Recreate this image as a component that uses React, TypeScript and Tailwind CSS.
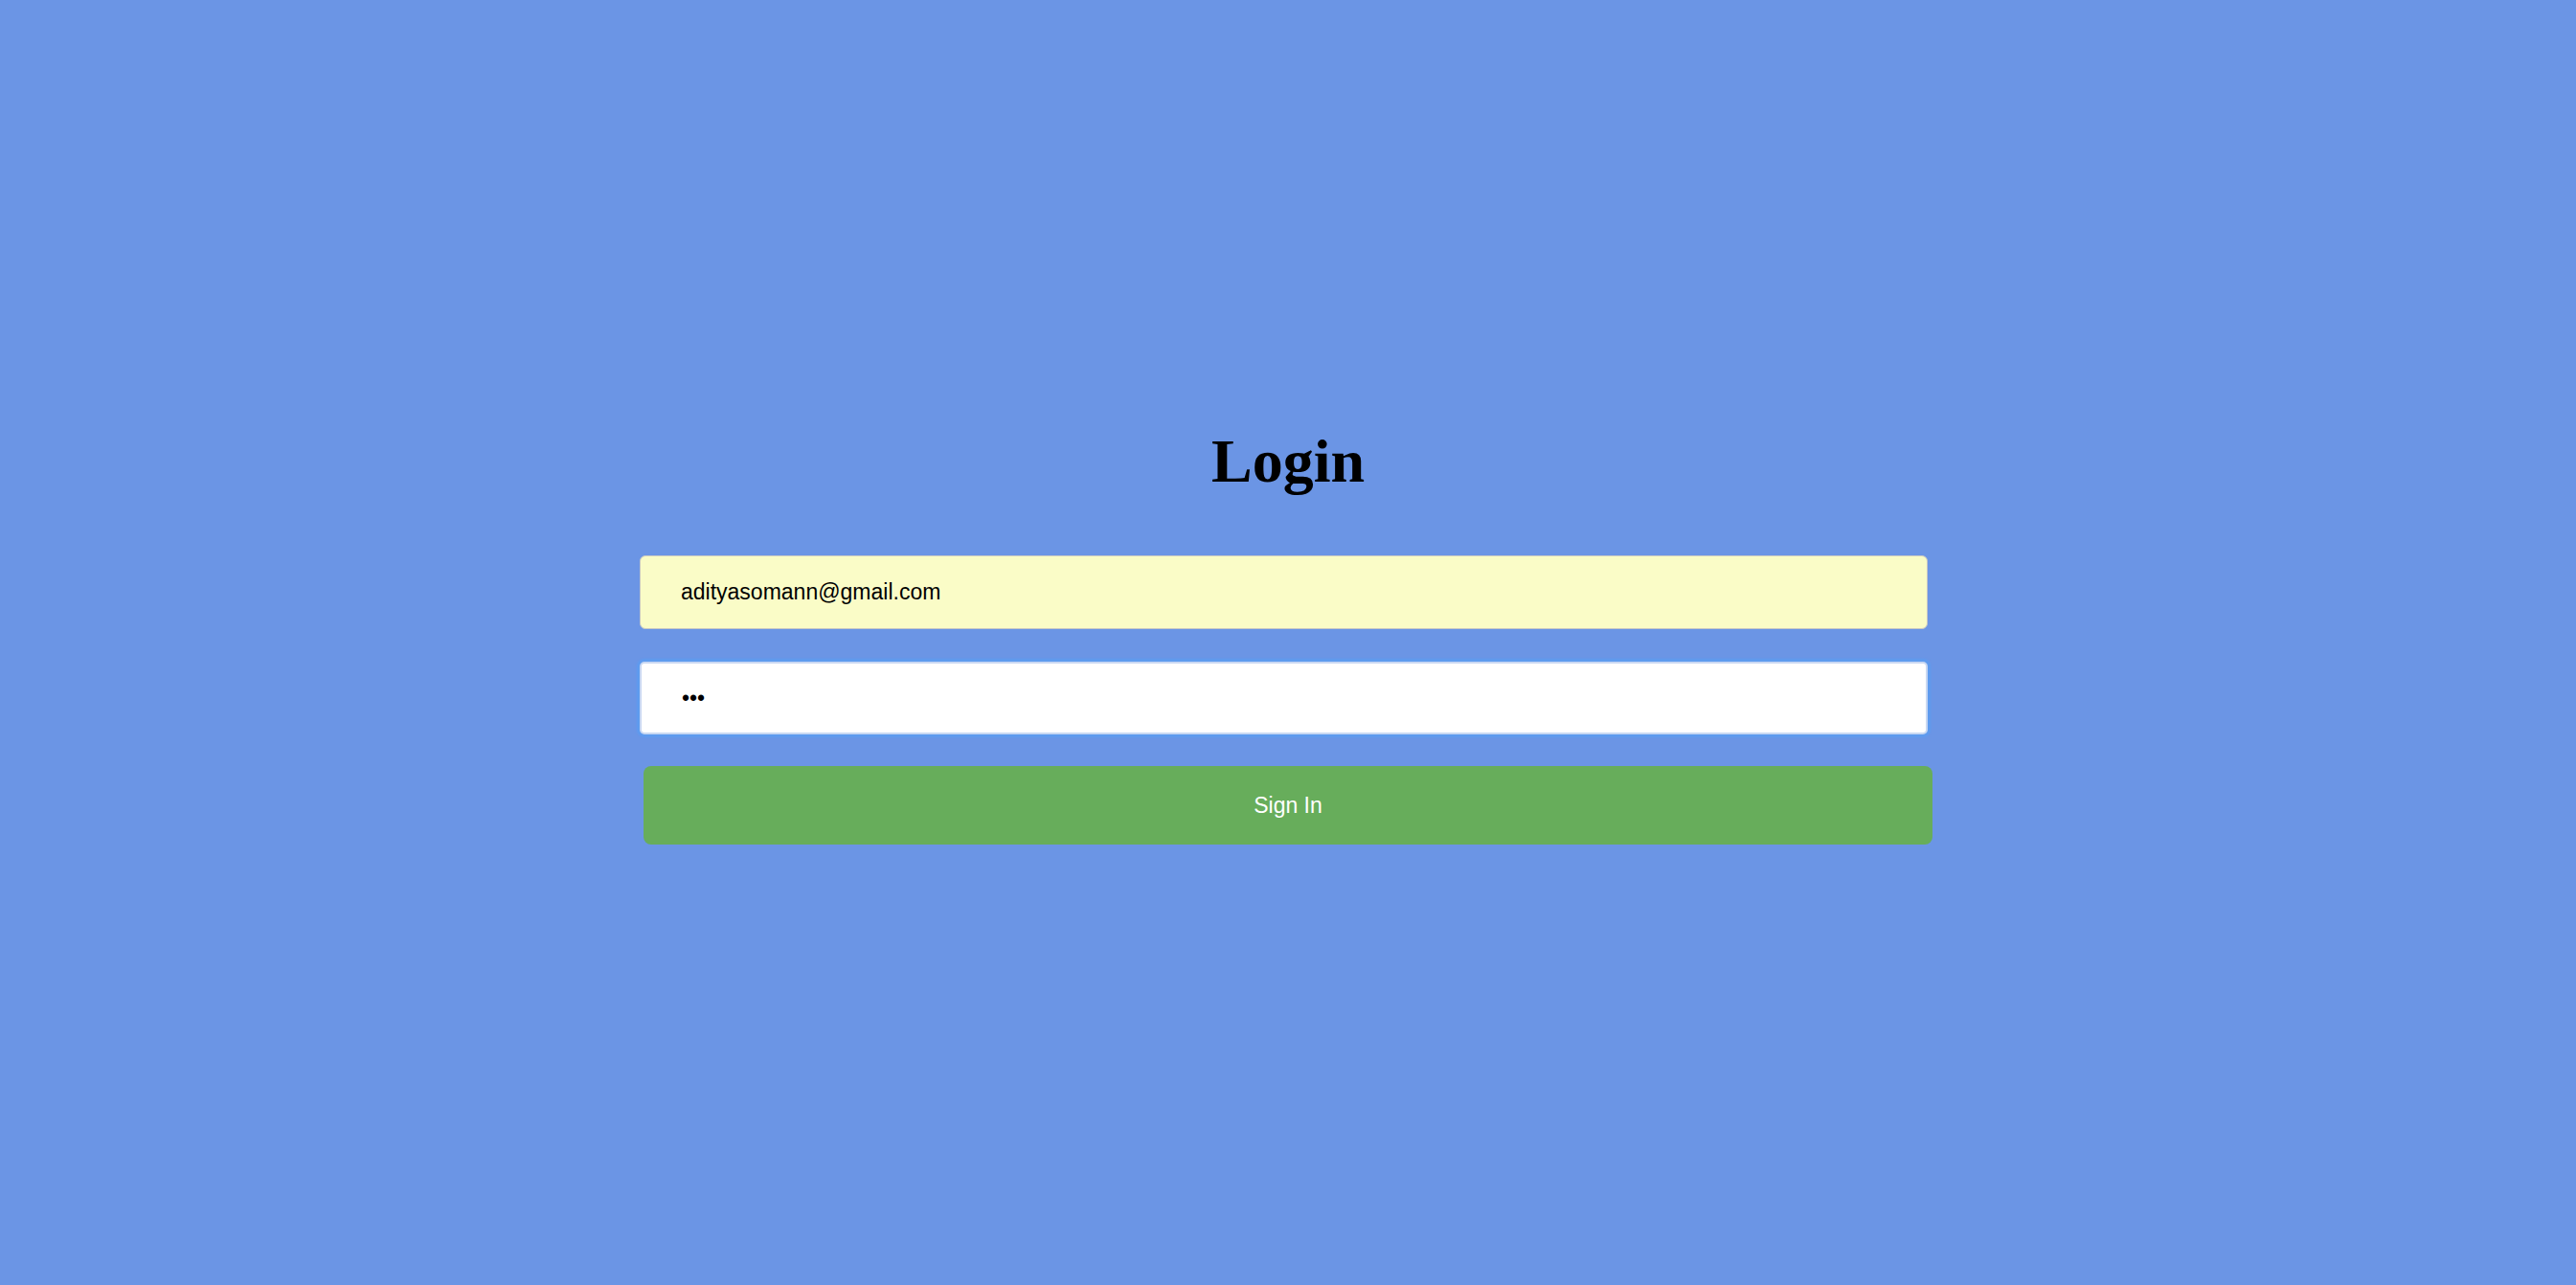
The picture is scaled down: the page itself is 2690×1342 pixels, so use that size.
import React from 'react'

export default function App() {
    return (
        <div className="min-h-screen w-full bg-[#6b95e5] font-['Liberation_Sans',Arial,sans-serif]">
            <div className="flex flex-col items-center pt-[443px]">
                <h1 className="text-[64px] leading-[77px] font-bold text-black font-['Liberation_Serif','Times_New_Roman',serif]">
                    Login
                </h1>
                <div className="w-[1350px] mr-[4px] mt-[60px] flex flex-col">
                    <input
                        type="email"
                        readOnly
                        value="adityasomann@gmail.com"
                        className="h-[77px] w-[1345px] px-[42px] bg-[#fafcc7] border border-[#c9c9c4] rounded-[6px] text-[23px] text-black outline-none"
                    />
                    <input
                        type="password"
                        readOnly
                        value="abc"
                        className="mt-[34px] h-[76px] w-[1345px] px-[42px] bg-white border-2 border-[#c9d8f2] rounded-[5px] text-[23px] text-black outline-none shadow-[0_0_2px_3px_#5e9bef]"
                    />
                    <button className="mt-[33px] ml-[4px] h-[82px] w-[1346px] bg-[#67ad5b] rounded-[8px] text-white text-[23px]">
                        Sign In
                    </button>
                </div>
            </div>
        </div>
    )
}
